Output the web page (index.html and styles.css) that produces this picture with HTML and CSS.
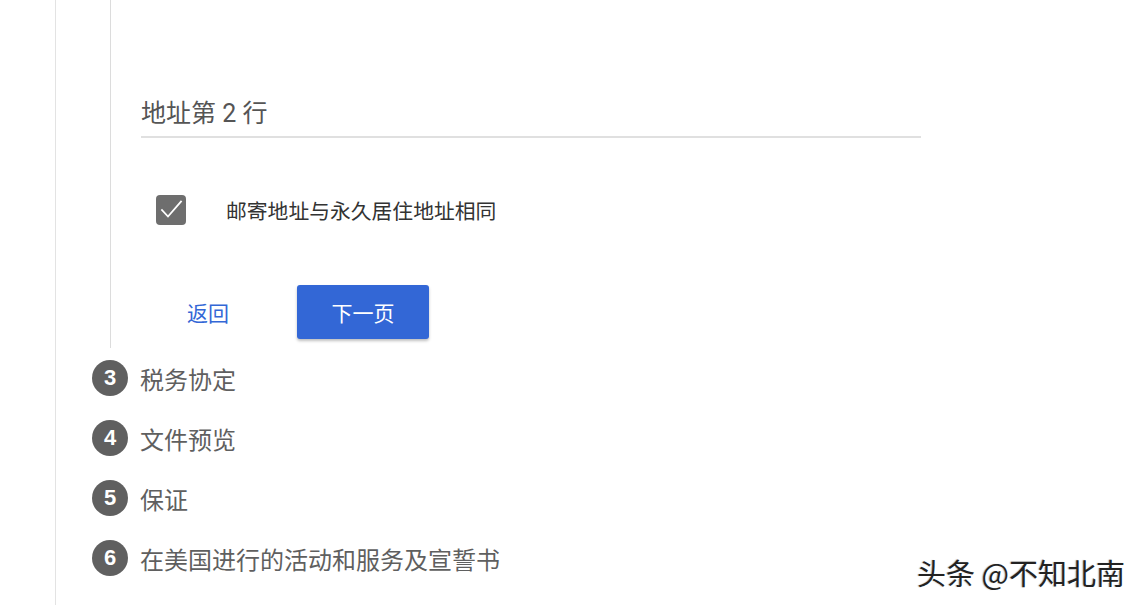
FILE: index.html
```html
<!DOCTYPE html>
<html lang="zh-CN">
<head>
<meta charset="utf-8">
<title>地址信息</title>
<link rel="stylesheet" href="styles.css">
</head>
<body>
<div class="page">
  <div class="stepper">
    <div class="step-body">
      <div class="field">
        <div class="field-input">地址第 2 行</div>
      </div>
      <label class="check-row">
        <span class="checkbox">
          <svg viewBox="0 0 30 30" width="30" height="30" aria-hidden="true">
            <path d="M6 15 L12 21.5 L25 6.5" fill="none" stroke="#fff" stroke-width="1.8" stroke-linecap="square"/>
          </svg>
        </span>
        <span class="check-label">邮寄地址与永久居住地址相同</span>
      </label>
      <div class="actions">
        <button class="btn-text" type="button">返回</button>
        <button class="btn-primary" type="button">下一页</button>
      </div>
    </div>
    <ol class="steps">
      <li class="step"><span class="step-num">3</span><span class="step-title">税务协定</span></li>
      <li class="step"><span class="step-num">4</span><span class="step-title">文件预览</span></li>
      <li class="step"><span class="step-num">5</span><span class="step-title">保证</span></li>
      <li class="step"><span class="step-num">6</span><span class="step-title">在美国进行的活动和服务及宣誓书</span></li>
    </ol>
  </div>
</div>
<div class="watermark">头条 @不知北南</div>
</body>
</html>
```

FILE: styles.css
```css
html, body {
  margin: 0;
  padding: 0;
  background: #fff;
  height: 605px;
  overflow: hidden;
}

body {
  font-family: Roboto, "Noto Sans CJK SC", sans-serif;
  color: #333;
}

.page {
  margin-left: 55px;
  border-left: 1px solid #e3e3e3;
  height: 605px;
}

.stepper {
  padding-left: 36px;
}

.step-body {
  margin-left: 18px;
  border-left: 1px solid #dcdcdc;
  padding-left: 30px;
  padding-bottom: 9px;
}

.field {
  padding-top: 97px;
}

.field-input {
  width: 780px;
  font-size: 25px;
  line-height: 33px;
  color: #555;
  padding-bottom: 6px;
  border-bottom: 2px solid #e0e0e0;
}

.check-row {
  display: flex;
  align-items: center;
  margin-top: 57px;
  margin-left: 15px;
  gap: 40px;
}

.checkbox {
  width: 30px;
  height: 30px;
  border-radius: 4px;
  background: #6e6e6e;
  display: flex;
}

.check-label {
  font-size: 20.8px;
  color: #333;
}

.actions {
  display: flex;
  align-items: center;
  margin-top: 60px;
  margin-left: 22px;
  gap: 44px;
}

.btn-text {
  width: 90px;
  height: 54px;
  border: 0;
  background: transparent;
  color: #3367d6;
  font: inherit;
  font-size: 21px;
  padding: 0;
}

.btn-primary {
  width: 132px;
  height: 54px;
  border: 0;
  border-radius: 3px;
  background: #3367d6;
  color: #fff;
  font: inherit;
  font-size: 21px;
  padding: 0;
  box-shadow: 0 2px 3px rgba(0, 0, 0, 0.25);
}

.steps {
  list-style: none;
  margin: 0;
  padding: 0;
}

.step {
  display: flex;
  align-items: center;
  height: 60px;
  gap: 12px;
}

.step-num {
  width: 36px;
  height: 36px;
  border-radius: 50%;
  background: #606060;
  color: #fff;
  font-family: "Liberation Sans", Arial, sans-serif;
  font-size: 22px;
  font-weight: 700;
  display: flex;
  align-items: center;
  justify-content: center;
}

.step-title {
  font-size: 24px;
  color: #5f5f5f;
}

.watermark {
  position: absolute;
  left: 917px;
  top: 552px;
  font-family: "Noto Sans CJK SC", sans-serif;
  font-size: 29px;
  line-height: 40px;
  color: #222;
  text-shadow: 1px 1px 0 #fff, -1px 0 1px #bbb;
}
```
